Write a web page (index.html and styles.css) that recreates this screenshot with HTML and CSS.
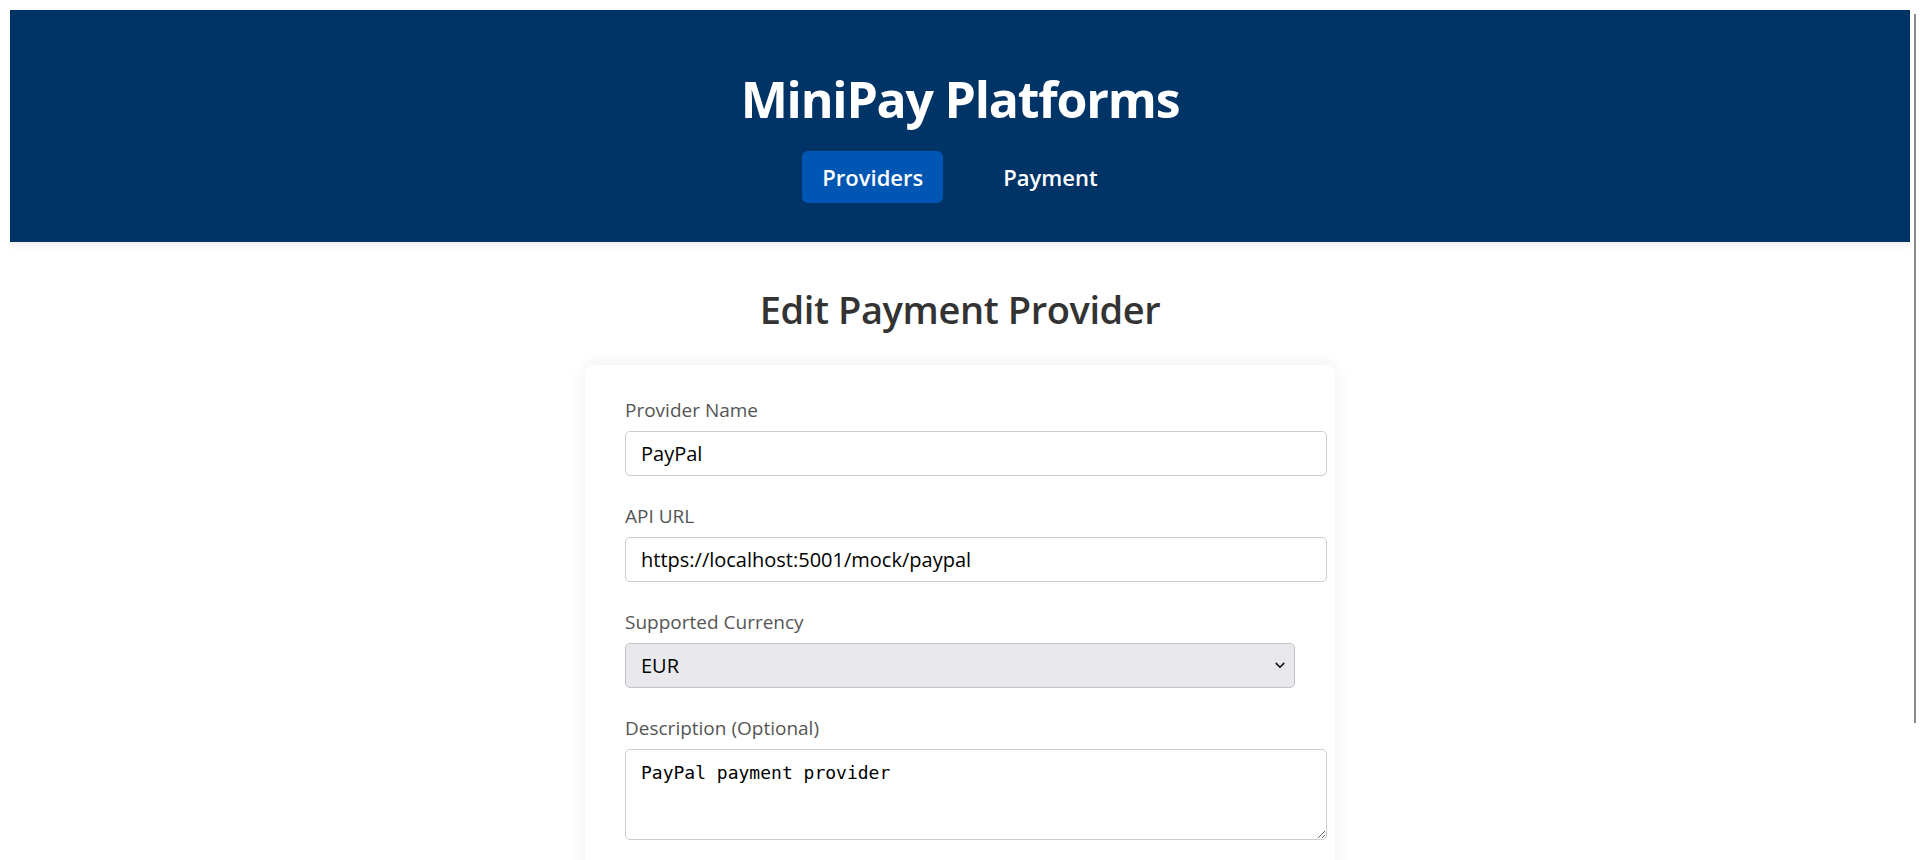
FILE: index.html
```html
<!DOCTYPE html>
<html lang="en">
<head>
<meta charset="utf-8">
<title>MiniPay Platforms - Edit Payment Provider</title>
<link rel="stylesheet" href="styles.css">
</head>
<body>
<header class="site-header">
  <h1 class="brand">MiniPay Platforms</h1>
  <nav class="nav">
    <a class="nav-link active" href="#">Providers</a>
    <a class="nav-link" href="#">Payment</a>
  </nav>
</header>
<main class="page">
  <h2 class="page-title">Edit Payment Provider</h2>
  <form class="card">
    <div class="field">
      <label class="field-label" for="name">Provider Name</label>
      <input class="text-input" id="name" type="text" value="PayPal">
    </div>
    <div class="field">
      <label class="field-label" for="url">API URL</label>
      <input class="text-input" id="url" type="text" value="https://localhost:5001/mock/paypal">
    </div>
    <div class="field">
      <label class="field-label" for="currency">Supported Currency</label>
      <div class="select-wrap">
        <select class="select-input" id="currency">
          <option>USD</option>
          <option selected>EUR</option>
          <option>GBP</option>
        </select>
        <svg class="select-chevron" width="10" height="7" viewBox="0 0 10 7" aria-hidden="true"><path d="M1.2 1.4 L5 5.2 L8.8 1.4" fill="none" stroke="#111" stroke-width="1.6" stroke-linecap="round" stroke-linejoin="round"/></svg>
      </div>
    </div>
    <div class="field">
      <label class="field-label" for="desc">Description (Optional)</label>
      <textarea class="text-area" id="desc">PayPal payment provider</textarea>
    </div>
  </form>
</main>
<div class="scroll-thumb"></div>
</body>
</html>
```

FILE: styles.css
```css
html {
  scrollbar-width: none;
}
html::-webkit-scrollbar,
body::-webkit-scrollbar {
  display: none;
  width: 0;
}
body {
  margin: 10px;
  font-family: "Open Sans", "Noto Sans", sans-serif;
  background: #ffffff;
  color: #333333;
}

.site-header {
  background: #003366;
  color: #ffffff;
  text-align: center;
  padding: 57px 20px 39px;
  box-shadow: 0 3px 8px rgba(0, 0, 0, 0.08);
}
.brand {
  margin: 0 0 20px;
  font-size: 50px;
  line-height: 64px;
  font-weight: 700;
  letter-spacing: -1.2px;
}
.nav {
  display: flex;
  justify-content: center;
  gap: 40px;
}
.nav-link {
  color: #ffffff;
  text-decoration: none;
  font-size: 22px;
  font-weight: 600;
  line-height: 32px;
  padding: 10px 20px;
  border-radius: 6px;
}
.nav-link.active {
  background: #0056b3;
}

.page {
  display: flex;
  flex-direction: column;
  align-items: center;
}
.page-title {
  margin: 43px 0 32px;
  font-size: 38px;
  line-height: 48px;
  font-weight: 600;
  letter-spacing: -0.4px;
  color: #333333;
}
.card {
  width: 750px;
  box-sizing: border-box;
  padding: 32px 40px 80px;
  background: #ffffff;
  border-radius: 10px;
  box-shadow: 0 0 18px rgba(0, 0, 0, 0.08);
}
.field {
  margin-bottom: 27px;
}
.field-label {
  display: block;
  font-size: 19px;
  line-height: 26px;
  color: #555555;
  margin-bottom: 8px;
}
.text-input {
  display: block;
  width: 100%;
  height: 43px;
  padding: 0 15px;
  border: 1px solid #cccccc;
  border-radius: 5px;
  font-family: inherit;
  font-size: 20px;
  color: #000000;
  background: #ffffff;
  outline: none;
}
.select-wrap {
  position: relative;
  width: 100%;
}
.select-input {
  display: block;
  width: 100%;
  height: 45px;
  box-sizing: border-box;
  padding: 0 15px;
  border: 1px solid #c4c4c8;
  border-radius: 5px;
  background: #e9e9ed;
  font-family: inherit;
  font-size: 20px;
  color: #000000;
  appearance: none;
  -webkit-appearance: none;
  outline: none;
}
.select-chevron {
  position: absolute;
  right: 10px;
  top: 19px;
  pointer-events: none;
}
.text-area {
  display: block;
  width: 100%;
  height: 65px;
  padding: 12px 15px;
  border: 1px solid #cccccc;
  border-radius: 5px;
  font-family: "DejaVu Sans Mono", "Liberation Mono", monospace;
  font-size: 18px;
  line-height: 22px;
  color: #000000;
  outline: none;
}
.scroll-thumb {
  position: fixed;
  top: 14px;
  right: 4px;
  width: 2px;
  height: 709px;
  background: #8c8c8c;
}
```
